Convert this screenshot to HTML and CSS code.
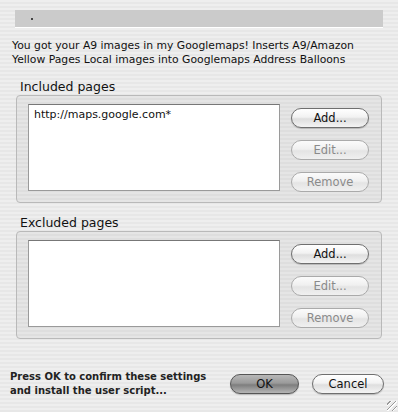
FILE: index.html
```html
<!DOCTYPE html>
<html lang="en">
<head>
    <meta charset="UTF-8">
    <title>Install User Script</title>
    <link rel="stylesheet" href="styles.css">
</head>
<body>
    <div class="dialog">
        <div class="progress"><span class="dot"></span></div>

        <p class="desc">You got your A9 images in my Googlemaps! Inserts A9/Amazon Yellow Pages Local images into Googlemaps Address Balloons</p>

        <div class="group-label">Included pages</div>
        <div class="group">
            <div class="list">
                <div class="list-item">http://maps.google.com*</div>
            </div>
            <div class="buttons">
                <button class="btn">Add...</button>
                <button class="btn" disabled>Edit...</button>
                <button class="btn" disabled>Remove</button>
            </div>
        </div>

        <div class="group-label">Excluded pages</div>
        <div class="group">
            <div class="list"></div>
            <div class="buttons">
                <button class="btn">Add...</button>
                <button class="btn" disabled>Edit...</button>
                <button class="btn" disabled>Remove</button>
            </div>
        </div>

        <div class="footer">
            <p class="confirm">Press OK to confirm these settings<br>and install the user script...</p>
            <button class="btn btn-default">OK</button>
            <button class="btn btn-cancel">Cancel</button>
        </div>
        <div class="grip"></div>
    </div>
</body>
</html>
```

FILE: styles.css
```css
body {
    margin: 0;
    padding: 0;
    background: repeating-linear-gradient(#eeeeee 0 2px, #e7e7e7 2px 4px);
    font-family: "DejaVu Sans", "Noto Sans", sans-serif;
    color: #111;
}
.dialog {
    position: relative;
    width: 398px;
    height: 412px;
    padding-top: 10px;
    box-sizing: border-box;
}
.progress {
    margin-left: 15px;
    width: 368px;
    height: 17px;
    background-color: #cbcbcb;
    border-bottom: 1px solid #ffffff;
    display: flex;
    align-items: center;
}
.dot {
    width: 2px;
    height: 2px;
    margin-left: 16px;
    background-color: #444;
}
.desc {
    margin: 11px 0 0 12px;
    font-size: 10.8px;
    line-height: 14px;
    width: 370px;
}
.group-label {
    margin: 12px 0 0 20px;
    font-size: 12.5px;
    line-height: 15px;
}
.group + .group-label {
    margin-top: 12px;
}
.group {
    margin: 1px 16px 0 16px;
    height: 108px;
    box-sizing: border-box;
    border: 1px solid #b9b9b9;
    border-radius: 4px;
    background-color: rgba(0, 0, 0, 0.035);
    display: flex;
    padding: 8px 0 0 11px;
}
.list {
    width: 252px;
    height: 87px;
    box-sizing: border-box;
    background-color: #ffffff;
    border: 1px solid #9a9a9a;
    border-top-color: #777;
    padding: 3px 5px;
}
.list-item {
    font-size: 11px;
    line-height: 13px;
}
.buttons {
    display: flex;
    flex-direction: column;
    gap: 12px;
    margin: 4px 0 0 11px;
}
.btn {
    width: 78px;
    height: 20px;
    padding: 0;
    border: 1px solid #6f6f6f;
    border-radius: 10px;
    background: linear-gradient(#ffffff 0%, #f2f2f2 45%, #dedede 55%, #f4f4f4 100%);
    box-shadow: 0 1px 1px rgba(0, 0, 0, 0.2);
    font-family: "DejaVu Sans", sans-serif;
    font-size: 11.5px;
    color: #111;
}
.btn:disabled {
    border-color: #aaaaaa;
    color: #8a8a8a;
    background: linear-gradient(#fbfbfb 0%, #f0f0f0 45%, #e4e4e4 55%, #f0f0f0 100%);
    box-shadow: none;
}
.footer {
    display: flex;
    align-items: center;
    margin-top: 31px;
}
.confirm {
    margin: 0 0 0 10px;
    width: 216px;
    font-size: 10px;
    font-weight: bold;
    line-height: 14px;
    color: #222;
}
.btn-default {
    width: 69px;
    margin-left: 4px;
    border-color: #555;
    background: linear-gradient(#b8b8b8 0%, #9a9a9a 45%, #7e7e7e 55%, #b5b5b5 100%);
}
.btn-cancel {
    width: 72px;
    margin-left: 13px;
}
.grip {
    position: absolute;
    right: 1px;
    bottom: 1px;
    width: 10px;
    height: 10px;
    background: repeating-linear-gradient(135deg, transparent 0 2px, #999 2px 3px, #fff 3px 4px);
}
```
